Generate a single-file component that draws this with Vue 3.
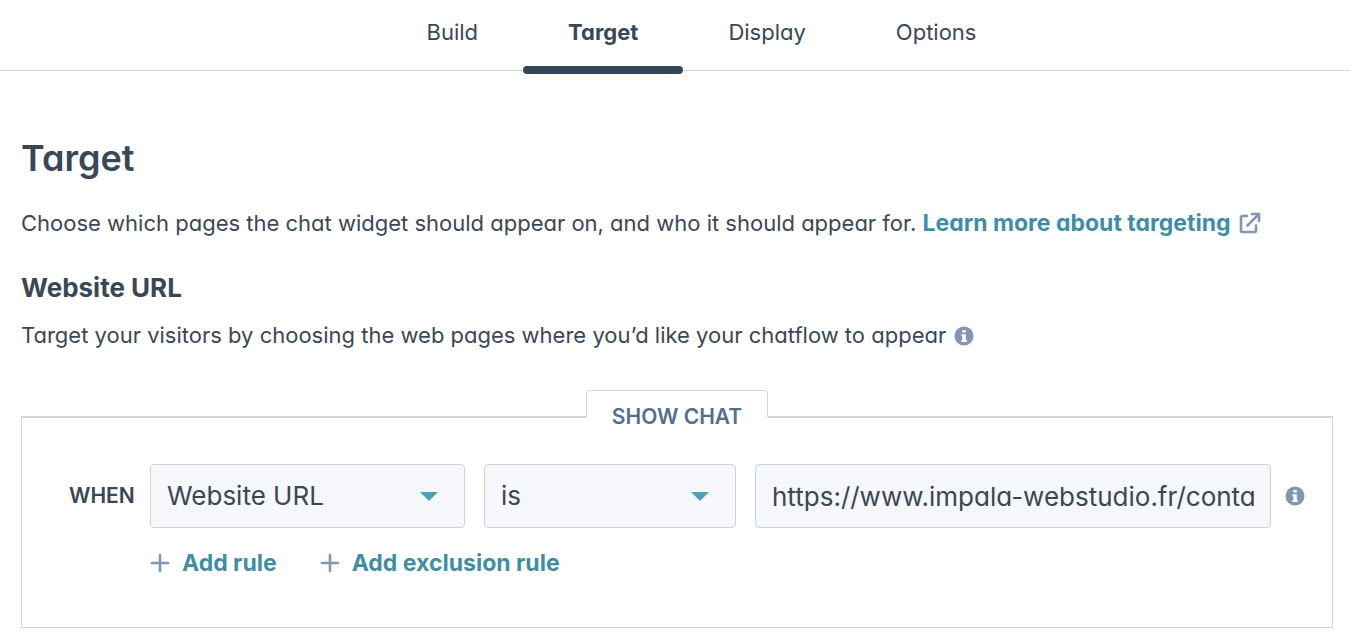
<script setup>
import { ref } from 'vue'

const tabs = ['Build', 'Target', 'Display', 'Options']
const activeTab = ref('Target')
const property = ref('Website URL')
const operator = ref('is')
const url = ref('https://www.impala-webstudio.fr/conta')
</script>

<template>
  <div class="page">
    <nav class="tabs" aria-label="Chatflow settings">
      <button
        v-for="tab in tabs"
        :key="tab"
        type="button"
        class="tab"
        :class="{ active: tab === activeTab }"
        @click="activeTab = tab"
      >{{ tab }}</button>
    </nav>

    <main class="content">
      <h1>Target</h1>
      <p class="intro">
        Choose which pages the chat widget should appear on, and who it should appear for.
        <a href="#" class="link">Learn more about targeting<svg class="external" viewBox="0 0 22 22" aria-hidden="true">
          <path d="M8 4H3.6A1.6 1.6 0 0 0 2 5.600V18.400A1.600 1.600 0 0 0 3.600 20H15.400A1.600 1.600 0 0 0 17 18.400V13.500M13 2h7v7M19.800 2.200L8.500 13.500" />
        </svg></a>
      </p>

      <h2>Website URL</h2>
      <p class="hint">
        Target your visitors by choosing the web pages where you’d like your chatflow to appear
        <svg class="info" viewBox="0 0 20 20" aria-hidden="true">
          <circle cx="10" cy="10" r="9.5" />
          <path d="M8.400 4h3.400v2.600H8.400zM7.400 8.200h4.400v5.800h1v2H7.400v-2h1v-3.800h-1z" />
        </svg>
      </p>

      <fieldset class="panel">
        <legend>SHOW CHAT</legend>
        <div class="rule">
          <label class="when" for="property">WHEN</label>
          <div class="fields">
            <div class="select">
              <select id="property" v-model="property">
                <option>Website URL</option>
                <option>Query parameter</option>
              </select>
              <svg viewBox="0 0 18 9" aria-hidden="true"><path d="M0 0h18L9 9z" /></svg>
            </div>
            <div class="select">
              <select v-model="operator" aria-label="Condition">
                <option>is</option>
                <option>contains</option>
              </select>
              <svg viewBox="0 0 18 9" aria-hidden="true"><path d="M0 0h18L9 9z" /></svg>
            </div>
            <input v-model="url" class="url" type="text" aria-label="URL" />
          </div>
          <svg class="info" viewBox="0 0 20 20" aria-hidden="true">
            <circle cx="10" cy="10" r="9.5" />
            <path d="M8.400 4h3.400v2.600H8.400zM7.400 8.200h4.400v5.800h1v2H7.400v-2h1v-3.800h-1z" />
          </svg>
        </div>
        <div class="actions">
          <button type="button">
            <svg viewBox="0 0 20 20" aria-hidden="true"><path d="M10 2v16M2 10h16" /></svg>
            Add rule
          </button>
          <button type="button">
            <svg viewBox="0 0 20 20" aria-hidden="true"><path d="M10 2v16M2 10h16" /></svg>
            Add exclusion rule
          </button>
        </div>
      </fieldset>
    </main>
  </div>
</template>

<style>
body {
  background: #fff;
}
</style>

<style scoped>
.page {
  font-family: Inter, Lato, "Open Sans", sans-serif;
  font-feature-settings: "cv11";
  font-size: 22px;
  font-weight: 400;
  line-height: 32px;
  color: #3a4757;
}
button,
select,
input {
  font: inherit;
  font-feature-settings: inherit;
  color: inherit;
  margin: 0;
}
.tabs {
  display: flex;
  justify-content: center;
  height: 70px;
  padding-left: 53px;
  border-bottom: 1px solid #d0d5dc;
}
.tab {
  position: relative;
  padding: 0 45px 6px;
  border: 0;
  background: none;
  cursor: pointer;
}
.tab.active {
  font-weight: 700;
}
.tab.active::after {
  content: "";
  position: absolute;
  left: 0;
  right: 0;
  bottom: -4px;
  height: 8px;
  border-radius: 4px;
  background: #33475b;
}
.content {
  padding: 65px 17px 14px 21px;
}
h1,
h2,
p {
  margin: 0;
}
h1 {
  font-size: 36px;
  line-height: 44px;
  font-weight: 600;
}
.intro {
  margin-top: 27px;
}
.link {
  color: #3f8ea3;
  font-size: 23px;
  font-weight: 700;
  text-decoration: none;
}
.external {
  width: 22px;
  height: 22px;
  margin-left: 8px;
  vertical-align: -3px;
  fill: none;
  stroke: #8196b3;
  stroke-width: 2.600;
  stroke-linecap: round;
  stroke-linejoin: round;
}
h2 {
  margin-top: 33px;
  font-size: 26px;
  line-height: 32px;
  font-weight: 700;
}
.hint {
  margin-top: 15px;
}
.info {
  width: 20px;
  height: 20px;
  flex: none;
  vertical-align: -3px;
}
.hint .info {
  margin-left: 2px;
}
.info circle {
  fill: #8196b3;
}
.info path {
  fill: #fff;
}
.panel {
  margin: 39px 0 0;
  padding: 20px 0 48px;
  border: 1px solid #cfd6e0;
  border-top-width: 2px;
  min-width: 0;
}
legend {
  position: relative;
  box-sizing: border-box;
  min-width: 182px;
  height: 54px;
  margin: 0 auto;
  padding: 0 20px;
  text-align: center;
  font-size: 21px;
  line-height: 54px;
  font-weight: 600;
  color: #516f90;
}
legend::before {
  content: "";
  position: absolute;
  inset: 0 0 50%;
  border: 1px solid #cfd6e0;
  border-bottom: 0;
  border-radius: 4px 4px 0 0;
}
.rule {
  display: flex;
  align-items: center;
  padding: 0 27px 0 47px;
}
.when {
  width: 81px;
  flex: none;
  font-size: 21px;
  font-weight: 600;
}
.fields {
  display: grid;
  grid-template-columns: 315fr 252fr 516fr;
  flex: 1;
  gap: 19px;
  margin-right: 14px;
  font-size: 26px;
}
.select {
  position: relative;
  min-width: 0;
}
.select select,
.url {
  display: block;
  box-sizing: border-box;
  width: 100%;
  min-width: 0;
  height: 64px;
  padding: 0 16px;
  border: 1px solid #cbd3dc;
  border-radius: 4px;
  background: #f5f7fa;
  appearance: none;
}
.select svg {
  position: absolute;
  right: 27px;
  top: 28px;
  width: 18px;
  height: 9px;
  fill: #4fa0b5;
  pointer-events: none;
}
.actions {
  display: flex;
  gap: 43px;
  margin: 19px 0 0 128px;
}
.actions button {
  display: flex;
  align-items: center;
  gap: 12px;
  padding: 0;
  border: 0;
  background: none;
  color: #3f8ea3;
  font-size: 23px;
  font-weight: 700;
  cursor: pointer;
}
.actions svg {
  width: 20px;
  height: 20px;
  fill: none;
  stroke: #8196b3;
  stroke-width: 2.600;
  stroke-linecap: round;
}
</style>
